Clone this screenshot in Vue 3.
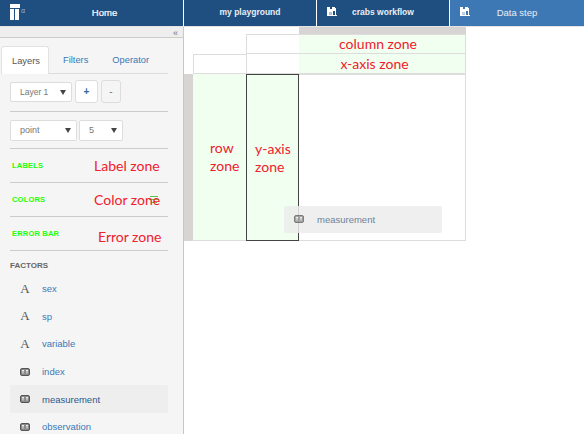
<template>
  <div class="app">
    <!-- Top bar -->
    <header class="topbar">
      <div class="tab home">
        <svg class="logo" width="10" height="16" viewBox="0 0 10 16">
          <rect x="0" y="0" width="10" height="4" fill="#fff" />
          <rect x="0" y="5" width="4" height="11" fill="#fff" />
          <rect x="5" y="5" width="4" height="11" fill="#fff" />
        </svg>
        <span class="alpha">α</span>
        <span>Home</span>
      </div>
      <div class="tab">my playground</div>
      <div class="tab wf">
        <svg class="wf-icon" width="10" height="10" viewBox="0 0 10 10">
          <path d="M0 0h8v4H6v4h1v1H0z" fill="#fff" />
          <rect x="3" y="0" width="2" height="2" fill="#1f4e80" />
          <rect x="2" y="5" width="3" height="3" fill="#1f4e80" opacity="0.35" />
          <rect x="8" y="1" width="1" height="8" fill="#fff" />
          <rect x="7" y="8" width="3" height="1" fill="#fff" />
        </svg>
        <span>crabs workflow</span>
      </div>
      <div class="tab wf active">
        <svg class="wf-icon" width="10" height="10" viewBox="0 0 10 10">
          <path d="M0 0h8v4H6v4h1v1H0z" fill="#fff" />
          <rect x="3" y="0" width="2" height="2" fill="#3d78b5" />
          <rect x="2" y="5" width="3" height="3" fill="#3d78b5" opacity="0.35" />
          <rect x="8" y="1" width="1" height="8" fill="#fff" />
          <rect x="7" y="8" width="3" height="1" fill="#fff" />
        </svg>
        <span>Data step</span>
      </div>
    </header>

    <div class="body">
      <!-- Left panel -->
      <aside class="sidebar">
        <div class="collapse">«</div>
        <nav class="tabs">
          <span class="side-tab on">Layers</span>
          <span class="side-tab">Filters</span>
          <span class="side-tab">Operator</span>
        </nav>

        <div class="section layer-row">
          <div class="select layer">Layer 1<i class="caret"></i></div>
          <button class="btn">+</button>
          <button class="btn minus">-</button>
        </div>
        <div class="section geom-row">
          <div class="select geom">point<i class="caret"></i></div>
          <div class="select size">5<i class="caret"></i></div>
        </div>

        <div class="section zone">LABELS</div>
        <div class="section zone">
          COLORS
          <svg class="sort" width="10" height="8" viewBox="0 0 10 8">
            <path d="M1 .5h8M0 3.5h10M2 6.5h6" stroke="#5fc04a" stroke-width="1" fill="none" />
          </svg>
        </div>
        <div class="section zone">ERROR BAR</div>

        <div class="factors-title">FACTORS</div>
        <ul class="factors">
          <li v-for="f in factors" :key="f.name" :class="{ picked: f.name === 'measurement' }">
            <span v-if="f.kind === 'text'" class="glyph">A</span>
            <svg v-else class="num" width="10" height="8" viewBox="0 0 10 8">
              <rect x=".5" y=".5" width="9" height="7" rx="1.5" fill="#8a8a8a" stroke="#555" />
              <path d="M2 2.5h2M3 2.5v3M6 2.5h2M7 2.5v3" stroke="#eee" stroke-width="1" fill="none" />
            </svg>
            <span class="fname">{{ f.name }}</span>
          </li>
        </ul>

        <span class="note n-label">Label zone</span>
        <span class="note n-color">Color zone</span>
        <span class="note n-error">Error zone</span>
      </aside>

      <!-- Plot drop zones -->
      <main class="canvas">
        <div class="plot">
          <div class="top-strip"></div>
          <div class="c cell-a"></div>
          <div class="c zone-green column">column zone</div>
          <div class="c cell-b"></div>
          <div class="c cell-c"></div>
          <div class="c zone-green xaxis">x-axis zone</div>
          <div class="left-strip"></div>
          <div class="zone-green row">row<br />zone</div>
          <div class="zone-green yaxis">y-axis<br />zone</div>
          <div class="c main"></div>
        </div>
        <div class="ghost">
          <svg class="num" width="10" height="8" viewBox="0 0 10 8">
            <rect x=".5" y=".5" width="9" height="7" rx="1.5" fill="#8a8a8a" stroke="#555" />
            <path d="M2 2.5h2M3 2.5v3M6 2.5h2M7 2.5v3" stroke="#eee" stroke-width="1" fill="none" />
          </svg>
          <span>measurement</span>
        </div>
      </main>
    </div>
  </div>
</template>

<script setup>
const factors = [
  { name: 'sex', kind: 'text' },
  { name: 'sp', kind: 'text' },
  { name: 'variable', kind: 'text' },
  { name: 'index', kind: 'num' },
  { name: 'measurement', kind: 'num' },
  { name: 'observation', kind: 'num' }
]
</script>

<style>
html, body {
  margin: 0;
  overflow: hidden;
  background: #fff;
}
</style>

<style scoped>
.app {
  width: 584px;
  height: 434px;
  overflow: hidden;
  font-family: "Liberation Sans", Arial, sans-serif;
  font-size: 9.3px;
  display: flex;
  flex-direction: column;
}

.topbar {
  height: 26px;
  flex: none;
  display: grid;
  grid-template-columns: 183px 132px 132px 1fr;
  column-gap: 1px;
  background: #fff;
  border-bottom: 1px solid #e4e4e4;
}

.tab {
  position: relative;
  display: flex;
  align-items: center;
  justify-content: center;
  padding-bottom: 2px;
  background: #1f4e80;
  font-size: 8.5px;
  font-weight: bold;
  color: #e8eef5;
}

.tab.home {
  padding-left: 26px;
  font-size: 9.5px;
  font-weight: normal;
  color: #fff;
  -webkit-text-stroke: 0.2px #fff;
}

.tab.active {
  background: #3d78b5;
}

.tab.active span {
  font-weight: normal;
  font-size: 9.5px;
}

.logo {
  position: absolute;
  left: 10px;
  top: 4px;
}

.alpha {
  position: absolute;
  left: 21px;
  top: 7px;
  font-size: 7px;
  line-height: 8px;
  color: #9db6d0;
  -webkit-text-stroke: 0;
}

.wf-icon {
  position: absolute;
  left: 10px;
  top: 7px;
}

.body {
  flex: 1;
  display: flex;
  min-height: 0;
}

.sidebar {
  position: relative;
  width: 184px;
  flex: none;
  background: #f5f5f5;
  border-right: 1px solid #c8c8c8;
  box-sizing: border-box;
  height: 407px;
  overflow: hidden;
}

.collapse {
  height: 10px;
  background: #eee;
  border-bottom: 1px solid #ccc;
  color: #777;
  font-size: 9px;
  line-height: 12px;
  text-align: right;
  padding-right: 5px;
}

.tabs {
  display: flex;
  height: 27px;
  margin: 8px 15px 0 1px;
  border-bottom: 1px solid #ddd;
  align-items: stretch;
  color: #3a78b5;
}

.side-tab {
  display: flex;
  align-items: center;
  padding: 0 12px;
}

.side-tab.on {
  background: #fff;
  color: #555;
  width: 26px;
  padding: 0 10px;
  border: 1px solid #e2e2e2;
  border-bottom: none;
  border-radius: 3px 3px 0 0;
  margin-bottom: -1px;
  margin-right: 2px;
}

.section {
  margin: 0 15px 0 10px;
  border-bottom: 1px solid #ccc;
  display: flex;
  align-items: center;
}

.layer-row {
  height: 37px;
  gap: 3px;
}

.geom-row {
  height: 36px;
  gap: 2px;
}

.select {
  position: relative;
  box-sizing: border-box;
  background: #fff;
  border: 1px solid #ddd;
  border-radius: 2px;
  color: #777;
  height: 21px;
  line-height: 19px;
  font-size: 8.5px;
  padding-left: 9px;
}

.select.layer {
  width: 62px;
  height: 20px;
  margin-top: -2px;
}

.select.geom {
  width: 67px;
  font-size: 9px;
}

.select.size {
  width: 44px;
  font-size: 9px;
}

.caret {
  position: absolute;
  right: 5px;
  top: 7px;
  border-left: 3.5px solid transparent;
  border-right: 3.5px solid transparent;
  border-top: 5px solid #444;
}

.btn {
  box-sizing: border-box;
  width: 23px;
  height: 23px;
  margin-top: -2px;
  padding: 0;
  background: #fff;
  border: 1px solid #ddd;
  border-radius: 3px;
  color: #336699;
  font-family: "Liberation Sans", Arial, sans-serif;
  font-size: 10px;
  font-weight: bold;
}

.btn.minus {
  width: 20px;
  background: #f5f5f5;
  color: #777;
  font-weight: normal;
}

.zone {
  position: relative;
  height: 33px;
  padding-left: 2px;
  box-sizing: content-box;
  color: #22ff00;
  font-size: 7.5px;
  font-weight: bold;
  letter-spacing: 0.2px;
}

.sort {
  position: absolute;
  left: 139px;
  top: 13px;
}

.factors-title {
  margin: 10px 0 0 10px;
  color: #666;
  font-size: 8px;
  font-weight: bold;
  line-height: 10px;
}

.factors {
  list-style: none;
  margin: 4px 15px 0 10px;
  padding: 0;
}

.factors li {
  display: flex;
  align-items: center;
  height: 27.6px;
  border-radius: 2px;
  color: #3a78b5;
  font-size: 9.5px;
}

.factors li.picked {
  background: #eee;
  color: #2a5a8a;
}

.glyph,
.factors .num {
  flex: none;
  margin-left: 10px;
  margin-right: 12px;
}

.glyph {
  width: 10px;
  font-family: "Liberation Serif", serif;
  font-size: 13px;
  color: #555;
  text-align: center;
}

.note {
  position: absolute;
  color: #f0202c;
  font-family: Lato, "Open Sans", sans-serif;
  font-size: 14px;
  line-height: 16px;
  white-space: nowrap;
}

.n-label { left: 94px; top: 131px; }
.n-color { left: 94px; top: 165px; }
.n-error { left: 98px; top: 202px; }

.canvas {
  position: relative;
  flex: 1;
  min-width: 0;
}

.plot {
  display: grid;
  grid-template-columns: 9px 53px 53px 167px;
  grid-template-rows: 7px 20px 20px 167px;
  color: #f0202c;
  font-family: Lato, "Open Sans", sans-serif;
  font-size: 14px;
  line-height: 18px;
}

.top-strip {
  grid-column: 4;
  grid-row: 1;
  background: #d8d4d4;
}

.c {
  box-sizing: border-box;
  border: 1px solid #ddd;
}

.cell-a {
  grid-column: 3;
  grid-row: 2;
  border-right: none;
}

.column {
  grid-column: 4;
  grid-row: 2;
  padding-right: 8px;
}

.cell-b {
  grid-column: 2;
  grid-row: 3;
  border-right: none;
}

.cell-c {
  grid-column: 3;
  grid-row: 3;
  border-top: none;
  border-right: none;
}

.xaxis {
  grid-column: 4;
  grid-row: 3;
  border-top: none;
  padding-right: 15px;
}

.zone-green {
  background: #f0fff0;
  display: flex;
  align-items: center;
  justify-content: center;
}

.column, .xaxis {
  border-left: none;
}

.left-strip {
  grid-column: 1;
  grid-row: 4;
  background: #d8d4d4;
}

.row {
  grid-column: 2;
  grid-row: 4;
  box-sizing: border-box;
  justify-content: flex-start;
  padding-left: 17px;
  border-bottom: 1px solid #ddd;
}

.yaxis {
  grid-column: 3;
  grid-row: 4;
  box-sizing: border-box;
  justify-content: flex-start;
  padding-left: 8px;
  border: 1px solid #444;
}

.main {
  grid-column: 4;
  grid-row: 4;
  border-left: none;
  border-top: 1px solid #ddd;
}

.ghost {
  position: absolute;
  left: 100px;
  top: 179px;
  width: 158px;
  height: 27px;
  box-sizing: border-box;
  display: flex;
  align-items: center;
  padding-left: 10px;
  gap: 13px;
  background: rgba(236, 236, 236, 0.85);
  border-radius: 2px;
  color: #6d8299;
  font-size: 9.5px;
}

.ghost .num {
  opacity: 0.75;
  margin-top: -2px;
}
</style>
